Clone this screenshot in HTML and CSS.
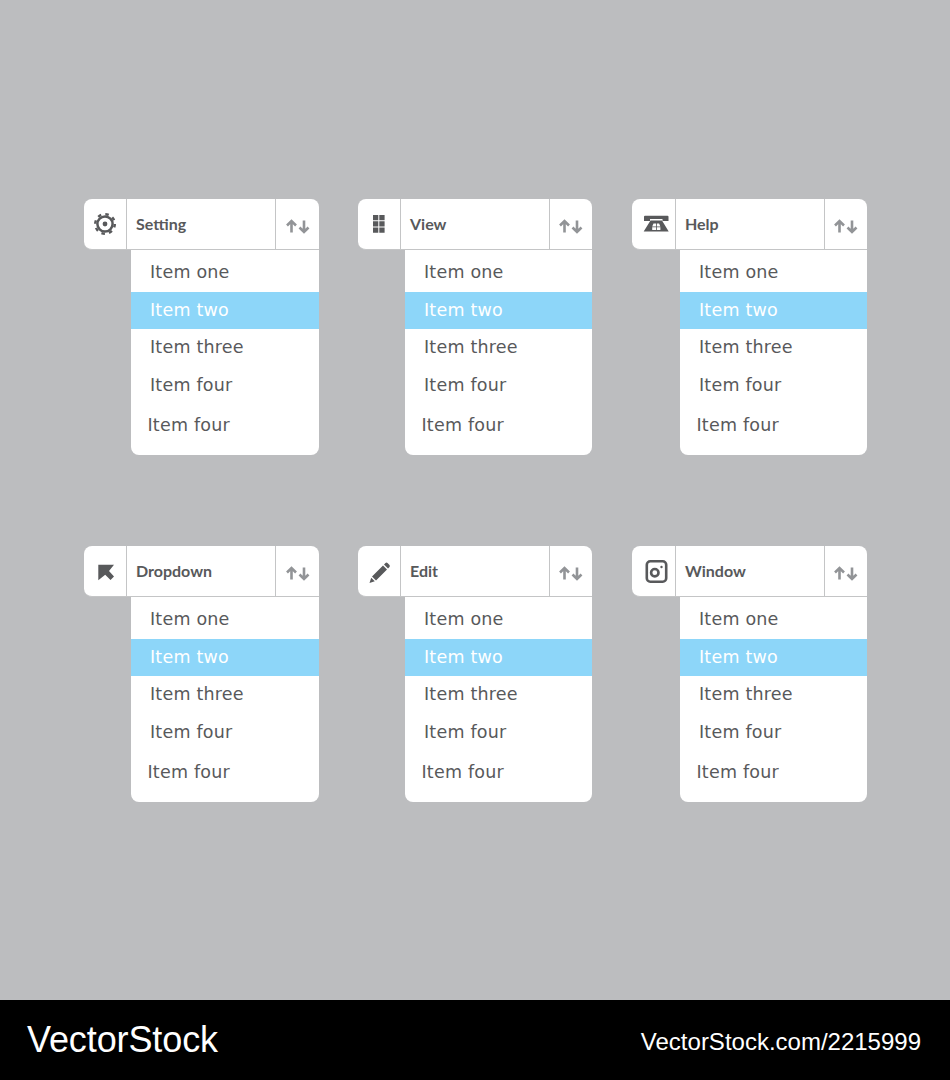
FILE: index.html
```html
<!DOCTYPE html>
<html lang="en">
<head>
<meta charset="utf-8">
<title>Dropdown menus</title>
<link rel="stylesheet" href="styles.css">
</head>
<body>
<svg class="defs" aria-hidden="true">
  <symbol id="sort" viewBox="0 0 30 30">
    <path d="M8.500 23.500V13M4 16.500l4.500-4.500 4.500 4.500" fill="none" stroke="currentColor" stroke-width="2.600"/>
    <path d="M21 11.500V22M16.500 18.500l4.500 4.500 4.500-4.500" fill="none" stroke="currentColor" stroke-width="2.600"/>
  </symbol>
  <symbol id="gear" viewBox="0 0 30 30">
    <circle cx="15" cy="15" r="7.600" fill="none" stroke="currentColor" stroke-width="2.500"/>
    <circle cx="15" cy="15" r="9.800" fill="none" stroke="currentColor" stroke-width="2.400" stroke-dasharray="3.500 4.200"/>
    <circle cx="15" cy="15" r="2.400" fill="currentColor"/>
  </symbol>
  <symbol id="tiles" viewBox="0 0 30 30">
    <path d="M9 6h5.300v5.200H9zM15.300 6h5.300v5.200h-5.300zM9 12.300h5.300v5.200H9zM15.300 12.300h5.300v5.200h-5.300zM9 18.600h5.300v5.200H9zM15.300 18.600h5.300v5.200h-5.300z" fill="currentColor"/>
  </symbol>
  <symbol id="phone" viewBox="0 0 30 30">
    <path d="M6 6.700h22.500q1 0 1 1V12h-6V10H11v2H5V7.700q0-1 1-1z" fill="currentColor"/>
    <path fill-rule="evenodd" d="M11.500 11.500h11.500l6.700 11H4.700zM13.200 21h3.800v-2.700h-3.800zM17.800 21h3.600v-2.700h-3.600zM13.200 17.500h3.800v-3h-2.500zM17.800 17.500h3.600l-1.300-3h-2.300z" fill="currentColor"/>
  </symbol>
  <symbol id="pointer" viewBox="0 0 30 30">
    <path d="M8.300 8.700H24l-5 6.300 5 5.500-3.500 3.500-5.300-5.300-6.900 5.600z" fill="currentColor"/>
  </symbol>
  <symbol id="pencil" viewBox="0 0 30 30">
    <path d="M8 20.500L19 9.500l4 4-11 11zM7.200 21.700l3.600 3.600L5.500 27zM20 8.500L21.500 7q1-.8 2 0l2 2q.7 1 0 2L24 12.500z" fill="currentColor"/>
  </symbol>
  <symbol id="lens" viewBox="0 0 30 30">
    <rect x="7.800" y="5.300" width="19.400" height="20.400" rx="3.500" fill="none" stroke="currentColor" stroke-width="2.600"/>
    <circle cx="15.800" cy="16.700" r="3.700" fill="none" stroke="currentColor" stroke-width="2.600"/>
    <circle cx="22.500" cy="11" r="1.200" fill="currentColor"/>
  </symbol>
</svg>

<main class="board">
  <section class="dropdown">
    <header class="head">
      <span class="icon"><svg class="glyph"><use href="#gear"/></svg></span>
      <span class="title">Setting</span>
      <span class="sort"><svg class="glyph"><use href="#sort"/></svg></span>
    </header>
    <ul class="menu">
      <li class="item first">Item one</li>
      <li class="item active">Item two</li>
      <li class="item third">Item three</li>
      <li class="item">Item four</li>
      <li class="item last">Item four</li>
    </ul>
  </section>

  <section class="dropdown">
    <header class="head">
      <span class="icon"><svg class="glyph"><use href="#tiles"/></svg></span>
      <span class="title">View</span>
      <span class="sort"><svg class="glyph"><use href="#sort"/></svg></span>
    </header>
    <ul class="menu">
      <li class="item first">Item one</li>
      <li class="item active">Item two</li>
      <li class="item third">Item three</li>
      <li class="item">Item four</li>
      <li class="item last">Item four</li>
    </ul>
  </section>

  <section class="dropdown">
    <header class="head">
      <span class="icon"><svg class="glyph"><use href="#phone"/></svg></span>
      <span class="title">Help</span>
      <span class="sort"><svg class="glyph"><use href="#sort"/></svg></span>
    </header>
    <ul class="menu">
      <li class="item first">Item one</li>
      <li class="item active">Item two</li>
      <li class="item third">Item three</li>
      <li class="item">Item four</li>
      <li class="item last">Item four</li>
    </ul>
  </section>

  <section class="dropdown">
    <header class="head">
      <span class="icon"><svg class="glyph"><use href="#pointer"/></svg></span>
      <span class="title">Dropdown</span>
      <span class="sort"><svg class="glyph"><use href="#sort"/></svg></span>
    </header>
    <ul class="menu">
      <li class="item first">Item one</li>
      <li class="item active">Item two</li>
      <li class="item third">Item three</li>
      <li class="item">Item four</li>
      <li class="item last">Item four</li>
    </ul>
  </section>

  <section class="dropdown">
    <header class="head">
      <span class="icon"><svg class="glyph"><use href="#pencil"/></svg></span>
      <span class="title">Edit</span>
      <span class="sort"><svg class="glyph"><use href="#sort"/></svg></span>
    </header>
    <ul class="menu">
      <li class="item first">Item one</li>
      <li class="item active">Item two</li>
      <li class="item third">Item three</li>
      <li class="item">Item four</li>
      <li class="item last">Item four</li>
    </ul>
  </section>

  <section class="dropdown">
    <header class="head">
      <span class="icon"><svg class="glyph"><use href="#lens"/></svg></span>
      <span class="title">Window</span>
      <span class="sort"><svg class="glyph"><use href="#sort"/></svg></span>
    </header>
    <ul class="menu">
      <li class="item first">Item one</li>
      <li class="item active">Item two</li>
      <li class="item third">Item three</li>
      <li class="item">Item four</li>
      <li class="item last">Item four</li>
    </ul>
  </section>
</main>

<footer class="footer">
  <span class="brand">VectorStock</span>
  <span class="ref">VectorStock.com/2215999</span>
</footer>
</body>
</html>
```

FILE: styles.css
```css
* { box-sizing: border-box; }

html, body {
  margin: 0;
  padding: 0;
}

body {
  width: 950px;
  height: 1080px;
  display: flex;
  flex-direction: column;
  background: #bcbdbf;
  color: #58595b;
  font-family: "DejaVu Sans", sans-serif;
  overflow: hidden;
}

.defs {
  width: 0;
  height: 0;
  position: absolute;
}

.board {
  flex: 1;
  padding: 199px 0 0 84px;
  display: grid;
  grid-template-columns: repeat(3, 235px);
  grid-auto-rows: 256px;
  column-gap: 39px;
  row-gap: 91px;
  align-content: start;
}

.dropdown {
  display: flex;
  flex-direction: column;
}

.dropdown:nth-child(3n+2) {
  margin-right: 1px;
}

.head {
  height: 51px;
  display: flex;
  background: #fff;
  border-radius: 8px 8px 0 8px;
  border-bottom: 1px solid #c4c5c6;
}

.icon {
  width: 43px;
  display: flex;
  align-items: center;
  justify-content: center;
  border-right: 1px solid #c4c5c6;
  color: #58595b;
}

.dropdown:nth-child(3n) .icon {
  width: 44px;
}

.glyph {
  width: 30px;
  height: 30px;
  display: block;
}

.title {
  flex: 1;
  padding-left: 9px;
  font: 700 16px/50px Lato, sans-serif;
  color: #58595b;
}

.sort {
  width: 44px;
  display: flex;
  align-items: center;
  justify-content: center;
  border-left: 1px solid #c4c5c6;
  color: #929497;
}

.dropdown:nth-child(3n) .sort,
.dropdown:nth-child(3n+2) .sort {
  width: 43px;
}

.menu {
  list-style: none;
  margin: 0 0 0 47px;
  padding: 0 0 7.500px;
  height: 205px;
  background: #fff;
  border-radius: 0 0 8px 8px;
  font-size: 17.500px;
  letter-spacing: 0.2px;
}

.dropdown:nth-child(3n) .menu {
  margin-left: 48px;
}

.item {
  height: 37.500px;
  line-height: 37.500px;
  padding-left: 19px;
}

.first {
  height: 41.500px;
  line-height: 44px;
}

.active {
  background: #8dd6f9;
  color: #fff;
  line-height: 36.500px;
}

.third {
  line-height: 36.500px;
}

.last {
  height: 43.500px;
  line-height: 43px;
  padding-left: 16.500px;
}

.footer {
  height: 80px;
  background: #000;
  color: #fff;
  display: flex;
  align-items: center;
  justify-content: space-between;
  padding: 0 29px 0 27px;
  font-family: "Liberation Sans", sans-serif;
}

.brand {
  font-size: 36px;
  letter-spacing: -0.1px;
}

.ref {
  margin-top: 4px;
  font-size: 24px;
}
```
